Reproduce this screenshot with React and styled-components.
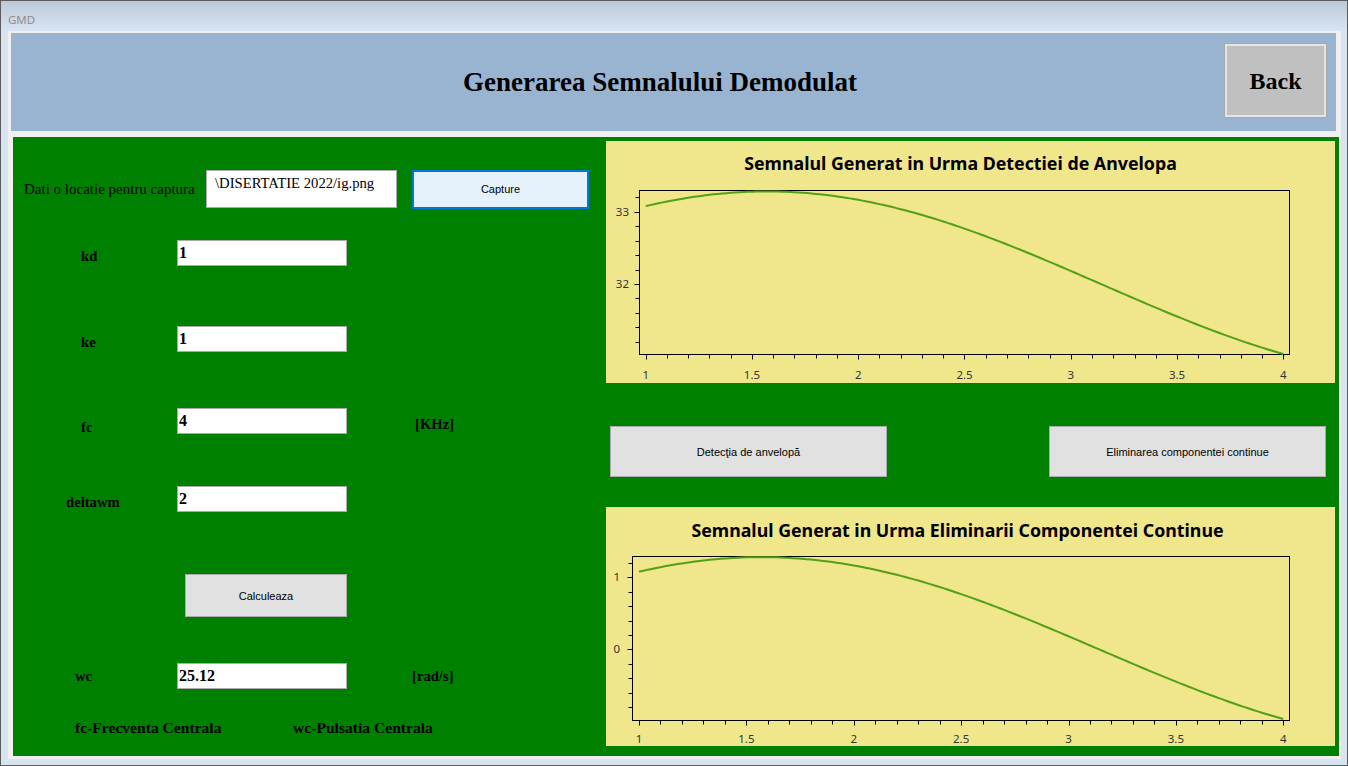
import React from 'react';
import styled, { createGlobalStyle } from 'styled-components';

const GlobalStyle = createGlobalStyle`
  html, body { margin: 0; padding: 0; background: #d9e4f1; }
  body { width: 1348px; height: 766px; overflow: hidden; }
  * { box-sizing: border-box; }
`;

const SERIF = '"Liberation Serif", "Times New Roman", serif';
const SANS = '"Liberation Sans", Arial, sans-serif';
const UI = '"Noto Sans", "Open Sans", sans-serif';

const Window = styled.div`
  width: 1348px;
  height: 766px;
  border: 1px solid #5c5c5c;
  background: #d9e4f1;
  display: flex;
  flex-direction: column;
`;

const TitleBar = styled.div`
  height: 30px;
  flex: none;
  background: linear-gradient(#bccad8, #d8e4f1);
  display: flex;
  align-items: center;
  padding: 6px 0 0 7px;
  font-family: ${UI};
  font-size: 11.5px;
  color: #8e8e8e;
`;

const Client = styled.div`
  flex: 1;
  margin: 0 6px 6px 7px;
  background: #f0f0f0;
  display: flex;
  flex-direction: column;
`;

const Header = styled.div`
  height: 98px;
  margin: 2px 5px 0 3px;
  background: #99b4d1;
  display: flex;
  align-items: center;
  padding-right: 9px;
`;

const HeaderTitle = styled.h1`
  flex: 1;
  margin: 0;
  padding-left: 85px;
  text-align: center;
  font-family: ${SERIF};
  font-weight: bold;
  font-size: 27px;
  color: #000;
`;

const BackButton = styled.button`
  width: 103px;
  height: 75px;
  margin-top: -3px;
  padding: 2px 0 0;
  background: #c0c0c0;
  border: 1px solid #a9a9a9;
  box-shadow: inset 0 0 0 2px #e4e4e4;
  font-family: ${SERIF};
  font-weight: bold;
  font-size: 24px;
  color: #000;
`;

const GreenPanel = styled.div`
  height: 619px;
  margin: 6px 2px 0 5px;
  background: #008000;
  display: flex;
  align-items: flex-start;
  padding: 4px 3px 10px 0;
`;

const LeftColumn = styled.div`
  width: 593px;
  flex: none;
  display: flex;
  flex-direction: column;
`;

const CaptureRow = styled.div`
  margin-top: 28px;
  height: 40px;
  display: flex;
  align-items: center;
`;

const PlainLabel = styled.span`
  width: 193px;
  padding-left: 11px;
  font-family: ${SERIF};
  font-size: 15px;
  color: #000;
  white-space: nowrap;
`;

const PathBox = styled.div`
  width: 191px;
  height: 38px;
  background: #fff;
  border: 1px solid #ababab;
  padding: 4px 0 0 8px;
  font-family: ${SERIF};
  font-size: 14.67px;
  line-height: 17px;
  color: #000;
  white-space: nowrap;
  overflow: hidden;
`;

const WinButton = styled.button`
  width: ${p => p.$w}px;
  height: ${p => p.$h}px;
  margin-left: ${p => p.$ml || 0}px;
  margin-top: ${p => p.$mt || 0}px;
  background: ${p => (p.$focused ? '#e5f1fb' : '#e1e1e1')};
  border: ${p => (p.$focused ? '2px solid #0078d7' : '1px solid #adadad')};
  font-family: ${SANS};
  font-size: 11px;
  color: #000;
  padding: 0;
  flex: none;
`;

const FieldRow = styled.div`
  margin-top: ${p => p.$mt}px;
  height: 26px;
  display: grid;
  grid-template-columns: 164px 170px 1fr;
  align-items: center;
`;

const FieldLabel = styled.span`
  padding-left: ${p => p.$indent}px;
  margin-top: ${p => p.$drop * 2}px;
  font-family: ${SERIF};
  font-weight: bold;
  font-size: 14.67px;
  line-height: 14.67px;
  color: #000;
  white-space: nowrap;
`;

const ValueInput = styled.input`
  width: 170px;
  height: 26px;
  border: 1px solid #ababab;
  background: #fff;
  padding: 0 0 0 1px;
  margin: 0;
  font-family: ${SERIF};
  font-weight: bold;
  font-size: 16px;
  color: #000;
  outline: none;
`;

const Unit = styled(FieldLabel)``;

const Footer = styled.div`
  margin-top: 31px;
  display: grid;
  grid-template-columns: 218px auto;
  padding-left: 62px;
  font-family: ${SERIF};
  font-weight: bold;
  font-size: 15.6px;
  line-height: 16px;
  color: #000;
  white-space: nowrap;
`;

const RightColumn = styled.div`
  width: 729px;
  flex: none;
  display: flex;
  flex-direction: column;
`;

const ChartPanel = styled.div`
  height: ${p => p.$h}px;
  background: #f0e68c;
  display: flex;
  flex-direction: column;
  overflow: hidden;
  flex: none;
`;

const ChartTitle = styled.div`
  height: ${p => p.$h}px;
  line-height: ${p => p.$h}px;
  padding-right: ${p => p.$pr}px;
  text-align: center;
  font-family: ${UI};
  font-weight: bold;
  font-size: 17.8px;
  color: #000;
  flex: none;
  white-space: nowrap;
`;

const ButtonRow = styled.div`
  margin: 43px 0 30px;
  padding: 0 9px 0 4px;
  display: flex;
  justify-content: space-between;
  flex: none;
`;

function range(a, b, step) {
  const out = [];
  const n = Math.round((b - a) / step);
  for (let i = 0; i <= n; i++) out.push(+(a + i * step).toFixed(4));
  return out;
}

function Chart({ title, panelH, titleH, titlePad, svgH, cfg }) {
  const { px0, px1, yRef, pyRef, per, frame, yMajors, yTicks, yLabelEnd, xLabelBase, offset } = cfg;
  const sx = v => px0 + ((v - 1) * (px1 - px0)) / 3;
  const sy = v => pyRef - (v - yRef) * per;
  const pts = range(1, 4, 0.02).map(x => `${sx(x).toFixed(2)},${sy(offset + 1.28 * Math.sin(x)).toFixed(2)}`);
  const xTicks = range(1, 4, 0.1);
  const xLabels = [1, 1.5, 2, 2.5, 3, 3.5, 4];
  return (
    <ChartPanel $h={panelH}>
      <ChartTitle $h={titleH} $pr={titlePad}>{title}</ChartTitle>
      <svg width="729" height={svgH} style={{ display: 'block' }}>
        <rect x={frame.l} y={frame.t} width={frame.r - frame.l} height={frame.b - frame.t} fill="none" stroke="#000" strokeWidth="1" />
        {yTicks.map(v => {
          const y = Math.round(sy(v)) + 0.5;
          const major = yMajors.includes(v);
          return <line key={'y' + v} x1={frame.l - (major ? 5 : 4)} x2={frame.l} y1={y} y2={y} stroke="#000" strokeWidth="1" />;
        })}
        {xTicks.map(v => {
          const x = Math.round(sx(v)) + 0.5;
          const major = Math.abs(v * 2 - Math.round(v * 2)) < 1e-6;
          return <line key={'x' + v} x1={x} x2={x} y1={frame.b} y2={frame.b + (major ? 5 : 4)} stroke="#000" strokeWidth="1" />;
        })}
        {yMajors.map(v => (
          <text key={'yl' + v} x={yLabelEnd} y={sy(v) + 4} textAnchor="end" fontFamily='"Noto Sans", sans-serif' fontSize="11.5" fill="#333">
            {v}
          </text>
        ))}
        {xLabels.map(v => (
          <text key={'xl' + v} x={sx(v)} y={xLabelBase} textAnchor="middle" fontFamily='"Noto Sans", sans-serif' fontSize="11.5" fill="#333">
            {v}
          </text>
        ))}
        <polyline points={pts.join(' ')} fill="none" stroke="#52a015" strokeWidth="2" strokeLinejoin="round" />
      </svg>
    </ChartPanel>
  );
}

const chart1 = {
  px0: 39.7,
  px1: 677.3,
  yRef: 33,
  pyRef: 26.7,
  per: 72.3,
  frame: { l: 33.5, r: 683.5, t: 5.5, b: 169.5 },
  yMajors: [33, 32],
  yTicks: range(31.2, 33.2, 0.2),
  yLabelEnd: 23,
  xLabelBase: 194,
  offset: 32,
};

const chart2 = {
  px0: 33,
  px1: 677.3,
  yRef: 1,
  pyRef: 24.3,
  per: 72,
  frame: { l: 26.5, r: 683.5, t: 3.5, b: 167.5 },
  yMajors: [1, 0],
  yTicks: range(-0.8, 1.2, 0.2),
  yLabelEnd: 14,
  xLabelBase: 189.5,
  offset: 0,
};

export default function App() {
  return (
    <>
      <GlobalStyle />
      <Window>
        <TitleBar>GMD</TitleBar>
        <Client>
          <Header>
            <HeaderTitle>Generarea Semnalului Demodulat</HeaderTitle>
            <BackButton>Back</BackButton>
          </Header>
          <GreenPanel>
            <LeftColumn>
              <CaptureRow>
                <PlainLabel>Dati o locatie pentru captura</PlainLabel>
                <PathBox>\DISERTATIE 2022/ig.png</PathBox>
                <WinButton $w={177} $h={39} $ml={15} $focused>Capture</WinButton>
              </CaptureRow>
              <FieldRow $mt={31}>
                <FieldLabel $indent={68} $drop={3}>kd</FieldLabel>
                <ValueInput readOnly value="1" />
              </FieldRow>
              <FieldRow $mt={60}>
                <FieldLabel $indent={68} $drop={3}>ke</FieldLabel>
                <ValueInput readOnly value="1" />
              </FieldRow>
              <FieldRow $mt={56}>
                <FieldLabel $indent={68} $drop={6}>fc</FieldLabel>
                <ValueInput readOnly value="4" />
                <Unit $indent={68} $drop={2.5}>[KHz]</Unit>
              </FieldRow>
              <FieldRow $mt={52}>
                <FieldLabel $indent={53} $drop={3}>deltawm</FieldLabel>
                <ValueInput readOnly value="2" />
              </FieldRow>
              <WinButton $w={162} $h={43} $ml={172} $mt={62}>Calculeaza</WinButton>
              <FieldRow $mt={46}>
                <FieldLabel $indent={62} $drop={0}>wc</FieldLabel>
                <ValueInput readOnly value="25.12" />
                <Unit $indent={65} $drop={0}>[rad/s]</Unit>
              </FieldRow>
              <Footer>
                <span>fc-Frecventa Centrala</span>
                <span>wc-Pulsatia Centrala</span>
              </Footer>
            </LeftColumn>
            <RightColumn>
              <Chart title="Semnalul Generat in Urma Detectiei de Anvelopa" panelH={242} titleH={44} titlePad={20} svgH={198} cfg={chart1} />
              <ButtonRow>
                <WinButton $w={277} $h={51}>Detecţia de anvelopă</WinButton>
                <WinButton $w={277} $h={51}>Eliminarea componentei continue</WinButton>
              </ButtonRow>
              <Chart title="Semnalul Generat in Urma Eliminarii Componentei Continue" panelH={239} titleH={46} titlePad={26} svgH={193} cfg={chart2} />
            </RightColumn>
          </GreenPanel>
        </Client>
      </Window>
    </>
  );
}
